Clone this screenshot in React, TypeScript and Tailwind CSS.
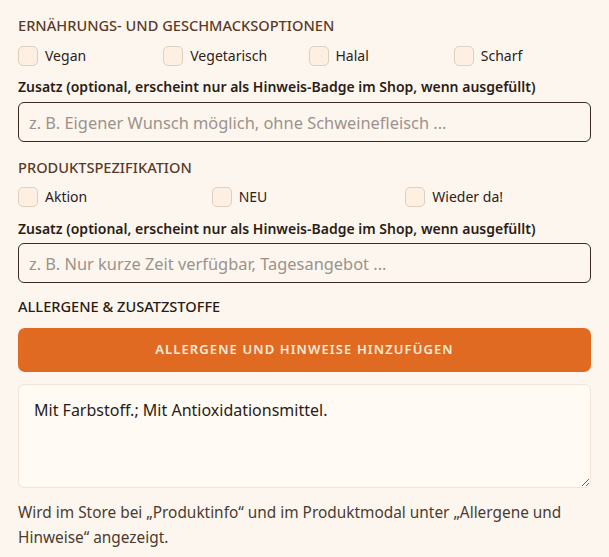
import React from 'react';

const dietOptions = ['Vegan', 'Vegetarisch', 'Halal', 'Scharf'];
const specOptions = ['Aktion', 'NEU', 'Wieder da!'];

const Check: React.FC<{ label: string }> = ({ label }) => (
  <label className="flex items-center gap-[7px] text-[14px] text-[#2e211a]">
    <span className="h-[20px] w-[20px] shrink-0 rounded-[5px] border border-[#dfcfbe] bg-[#fdf0e2]" />
    <span>{label}</span>
  </label>
);

const Heading: React.FC<{ children: React.ReactNode; dark?: boolean }> = ({ children, dark }) => (
  <h3
    className={
      dark
        ? 'text-[14.6px] leading-[21px] font-medium uppercase text-[#2a1c14]'
        : 'text-[14.6px] leading-[21px] font-medium uppercase text-[#5a3b2a]'
    }
  >
    {children}
  </h3>
);

const HintInput: React.FC<{ placeholder: string; className?: string; gap: string }> = ({
  placeholder,
  className,
  gap,
}) => (
  <div className={className}>
    <span className="block text-[14px] leading-[21px] font-semibold text-[#2a1d15]">
      Zusatz (optional, erscheint nur als Hinweis-Badge im Shop, wenn ausgefüllt)
    </span>
    <input
      placeholder={placeholder}
      className={`${gap} h-[40px] w-full rounded-[6px] border border-[#3b2b22] bg-transparent px-[10px] text-[16.4px] text-[#2a1d15] outline-none placeholder:text-[#9c928b]`}
    />
  </div>
);

export default function App() {
  return (
    <div
      className="min-h-[557px] w-full bg-[#fdf6ef] px-[18px] pt-[15px] pb-[10px]"
      style={{ fontFamily: '"Noto Sans", "Open Sans", sans-serif' }}
    >
      <section className="flex flex-col">
        <Heading>Ernährungs- und Geschmacksoptionen</Heading>
        <div className="mt-[9px] grid grid-cols-4 gap-2">
          {dietOptions.map((o) => (
            <Check key={o} label={o} />
          ))}
        </div>
        <HintInput
          className="mt-[10px]"
          gap="mt-[5px]"
          placeholder="z. B. Eigener Wunsch möglich, ohne Schweinefleisch ..."
        />
      </section>

      <section className="mt-[15px] flex flex-col">
        <Heading>Produktspezifikation</Heading>
        <div className="mt-[8px] grid grid-cols-3 gap-2">
          {specOptions.map((o) => (
            <Check key={o} label={o} />
          ))}
        </div>
        <HintInput
          className="mt-[11px]"
          gap="mt-[4px]"
          placeholder="z. B. Nur kurze Zeit verfügbar, Tagesangebot ..."
        />
      </section>

      <section className="mt-[13px] flex flex-col">
        <Heading dark>Allergene &amp; Zusatzstoffe</Heading>
        <button className="mt-[11px] h-[44px] w-full rounded-[7px] bg-[#e06a22] text-[13px] font-semibold uppercase tracking-[0.085em] text-[#fdebd9]">
          Allergene und Hinweise hinzufügen
        </button>
        <textarea
          defaultValue="Mit Farbstoff.; Mit Antioxidationsmittel."
          className="mt-[12px] h-[104px] w-full rounded-[6px] border border-[#f0e5d8] bg-[#fffaf4] px-[15px] py-[13px] text-[16px] text-[#2a1d15] outline-none"
        />
        <p className="mt-[12px] text-[15.4px] leading-[25px] text-[#4b3b31]">
          Wird im Store bei „Produktinfo“ und im Produktmodal unter „Allergene und Hinweise“ angezeigt.
        </p>
      </section>
    </div>
  );
}
